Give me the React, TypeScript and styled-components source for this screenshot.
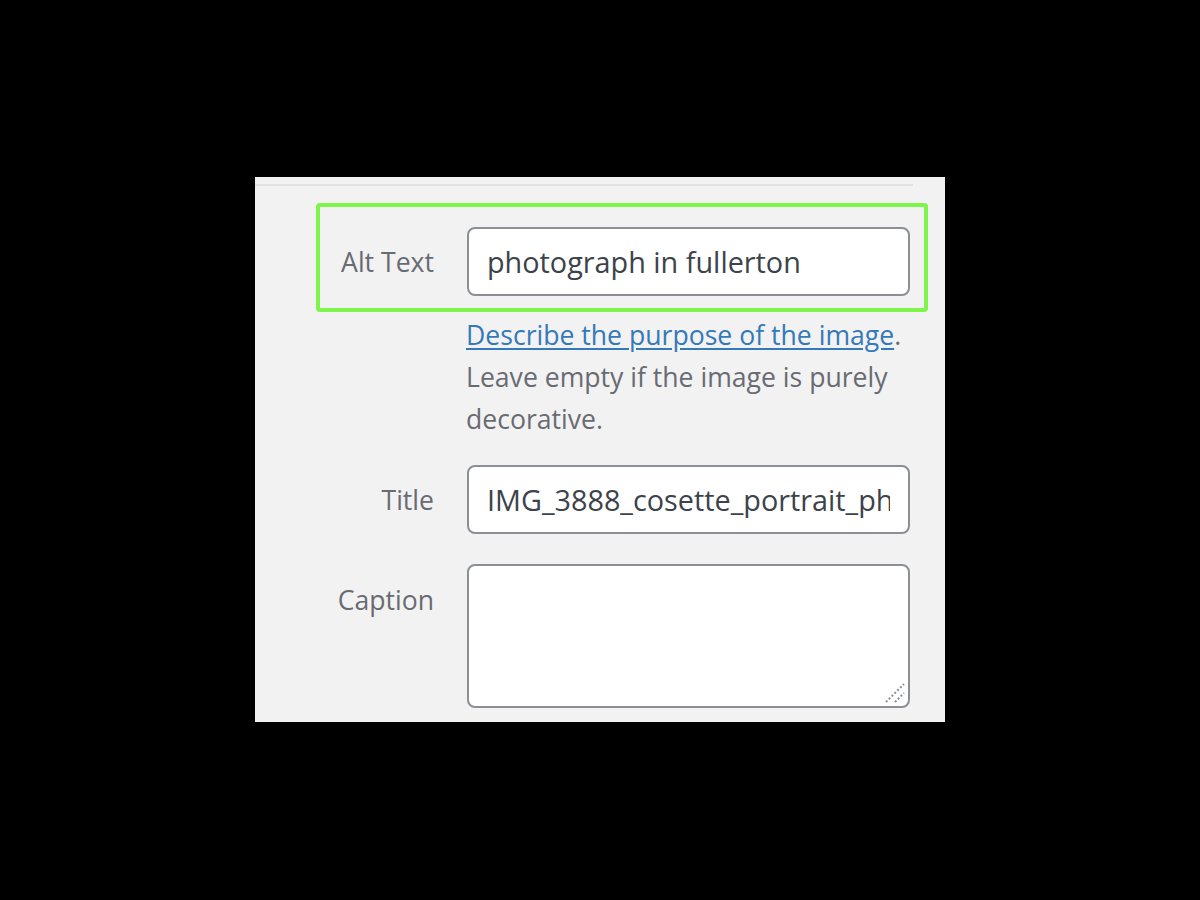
import React from "react";
import styled, { createGlobalStyle } from "styled-components";

const Global = createGlobalStyle`
  html, body { margin: 0; padding: 0; background: #000; }
  body { font-family: "Open Sans", "Noto Sans", sans-serif; }
  * { box-sizing: border-box; }
`;

const Page = styled.div`
  width: 1200px;
  height: 900px;
  background: #000;
  padding: 177px 0 0 255px;
`;

const Panel = styled.div`
  width: 690px;
  height: 545px;
  background: #f2f2f2;
  overflow: hidden;
  display: flex;
  flex-direction: column;
`;

const Separator = styled.div`
  height: 2px;
  width: 658px;
  margin-top: 7px;
  background: #e2e2e2;
`;

const Highlight = styled.div`
  margin: 17px 0 0 61px;
  width: 612px;
  border: 4px solid #7ef54a;
  border-radius: 4px;
  padding: 20px 0 12px 0;
`;

const Row = styled.div<{ $labelWidth: number; $align?: string }>`
  display: grid;
  grid-template-columns: ${(p) => p.$labelWidth}px 443px;
  column-gap: 33px;
  align-items: ${(p) => p.$align || "center"};
`;

const Label = styled.label<{ $top?: number }>`
  text-align: right;
  font-size: 26.6px;
  color: #686c72;
  padding-top: ${(p) => p.$top || 0}px;
`;

const Input = styled.input`
  width: 443px;
  height: 69px;
  border: 2px solid #8c8f94;
  border-radius: 8px;
  background: #fff;
  padding: 0 18px;
  font-family: inherit;
  font-size: 28.8px;
  color: #3c434a;
  outline: none;
`;

const AreaWrap = styled.div`
  position: relative;
  width: 443px;
  height: 144px;
`;

const Textarea = styled.textarea`
  width: 443px;
  height: 144px;
  border: 2px solid #8c8f94;
  border-radius: 8px;
  background: #fff;
  padding: 10px 18px;
  font-family: inherit;
  font-size: 28.8px;
  color: #3c434a;
  outline: none;
  resize: none;
  display: block;
`;

const Grip = styled.svg`
  position: absolute;
  right: 4px;
  bottom: 4px;
  pointer-events: none;
`;

const Help = styled.p`
  margin: 2px 0 0 211px;
  width: 450px;
  font-size: 26.6px;
  line-height: 42px;
  color: #686c72;
`;

const Link = styled.a`
  color: #3479b8;
  text-decoration: underline;
  text-underline-offset: 3px;
`;

const Spaced = styled.div<{ $top: number }>`
  margin-top: ${(p) => p.$top}px;
`;

export default function App() {
  return (
    <>
      <Global />
      <Page>
        <Panel>
          <Separator />
          <Highlight>
            <Row $labelWidth={114}>
              <Label>Alt Text</Label>
              <Input defaultValue="photograph in fullerton" />
            </Row>
          </Highlight>
          <Help>
            <Link href="#">Describe the purpose of the image</Link>.
            <br />
            Leave empty if the image is purely decorative.
          </Help>
          <Spaced $top={25}>
            <Row $labelWidth={179}>
              <Label>Title</Label>
              <Input defaultValue="IMG_3888_cosette_portrait_photograph" />
            </Row>
          </Spaced>
          <Spaced $top={30}>
            <Row $labelWidth={179} $align="start">
              <Label $top={18}>Caption</Label>
              <AreaWrap>
                <Textarea />
                <Grip width="22" height="22" viewBox="0 0 22 22">
                  <line x1="2" y1="20" x2="20" y2="2" stroke="#8a8d92" strokeWidth="2" strokeDasharray="2 2" />
                  <line x1="11" y1="20" x2="20" y2="11" stroke="#8a8d92" strokeWidth="2" strokeDasharray="2 2" />
                </Grip>
              </AreaWrap>
            </Row>
          </Spaced>
        </Panel>
      </Page>
    </>
  );
}
